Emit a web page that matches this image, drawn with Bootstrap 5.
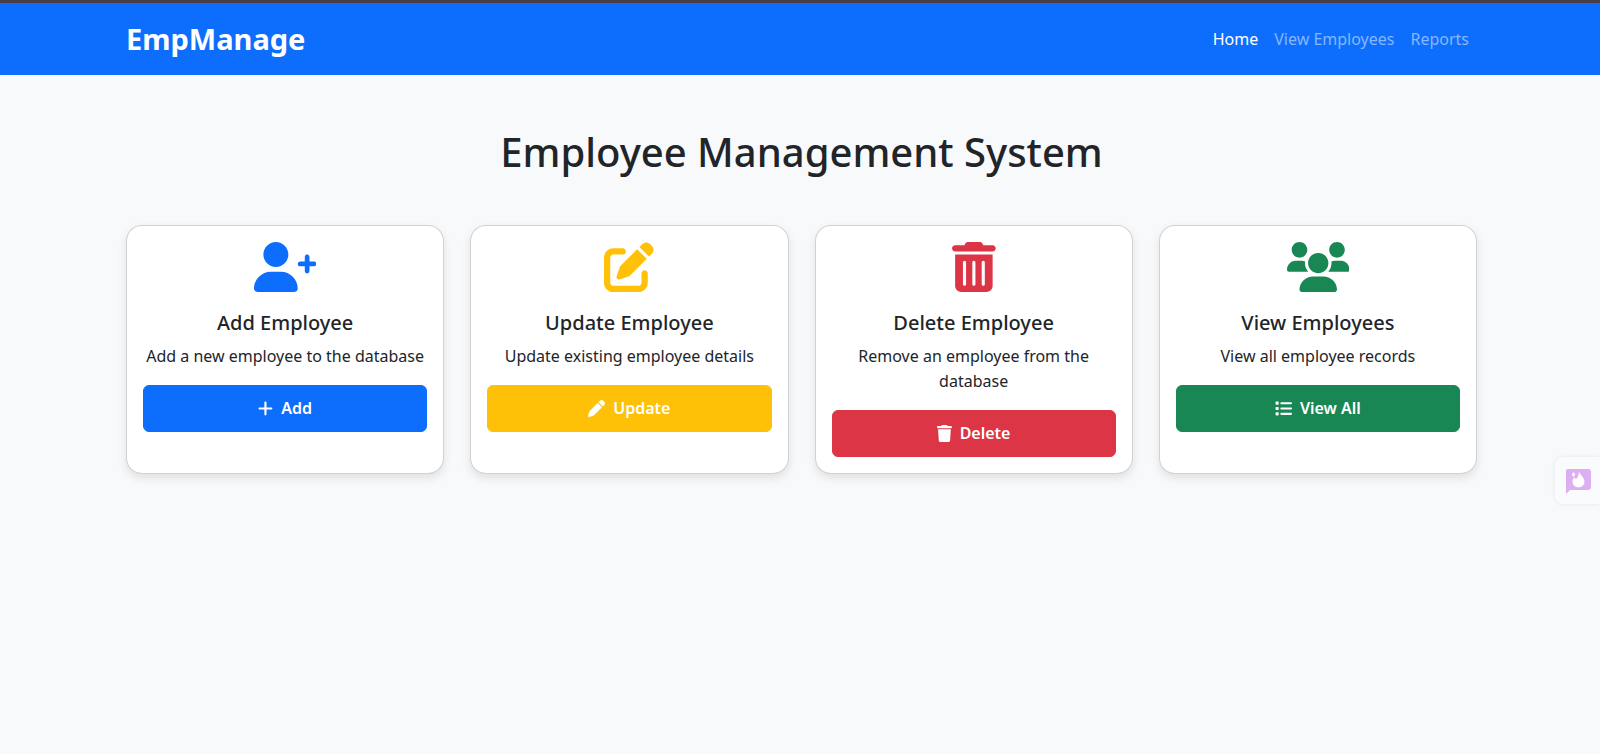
<!DOCTYPE html>
<html lang="en">
<head>
<meta charset="utf-8">
<meta name="viewport" content="width=device-width, initial-scale=1">
<title>EmpManage</title>
<link href="https://cdn.jsdelivr.net/npm/bootstrap@5.3.0/dist/css/bootstrap.min.css" rel="stylesheet">
<style>
  body { font-family: "Noto Sans", "Open Sans", sans-serif; font-size: 16px; line-height: 25px; background: #f8f9fa; }
  .page-width { max-width: 1378px; padding: 0 12px 0 15px; }
  .navbar > .page-width { padding: 0 12px 0 15px; }
  .site-nav { border-top: 3px solid #4c3d4b; padding: 8px 0; }
  .site-nav .navbar-brand { font-size: 29px; line-height: 40px; font-weight: 700; padding: 8px 0; margin: 0; }
  .site-nav .nav-link { padding: 8px; color: #86b7fe; }
  .site-nav .nav-link.active { color: #fff; }
  .page-title { font-size: 40px; line-height: 50px; font-weight: 500; margin: 52px 0 48px; }
  .action-row { --bs-gutter-x: 26px; --bs-gutter-y: 26px; }
  .action-card { border-radius: 16px; box-shadow: 0 4px 10px rgba(0, 0, 0, .1); }
  .action-icon { height: 50px; margin-bottom: 18px; }
  .action-card .card-title { font-size: 20px; line-height: 25px; margin-bottom: 9px; }
  .action-btn { font-size: 16px; line-height: 25px; font-weight: 600; padding: 10px; border-radius: 6px; gap: 8px; color: #fff; }
  .action-btn:hover { color: #fff; }
  .action-btn svg { height: 17px; }
  .side-tab { top: 457px; width: 45px; height: 47px; padding: 0 0 0 9px; border: 0; border-radius: 8px 0 0 8px; background: #fafbfc; box-shadow: 0 0 4px rgba(0, 0, 0, .08); }
</style>
</head>
<body class="min-vh-100">
<nav class="navbar navbar-expand-lg navbar-dark bg-primary site-nav">
  <div class="container page-width">
    <a class="navbar-brand" href="#">EmpManage</a>
    <ul class="navbar-nav ms-auto">
      <li class="nav-item"><a class="nav-link active" href="#">Home</a></li>
      <li class="nav-item"><a class="nav-link" href="#">View Employees</a></li>
      <li class="nav-item"><a class="nav-link" href="#">Reports</a></li>
    </ul>
  </div>
</nav>

<main class="container page-width pb-5">
  <h1 class="page-title text-center">Employee Management System</h1>
  <div class="row row-cols-1 row-cols-md-2 row-cols-lg-4 action-row">
    <div class="col">
      <div class="card h-100 text-center action-card">
        <div class="card-body">
          <svg class="action-icon text-primary" viewBox="0 0 640 512" fill="currentColor" aria-hidden="true"><path d="M224 256c70.7 0 128-57.31 128-128S294.7 0 224 0C153.3 0 96 57.31 96 128S153.3 256 224 256zM274.7 304H173.3C77.61 304 0 381.6 0 477.3c0 19.14 15.52 34.67 34.66 34.67h378.7C432.5 512 448 496.5 448 477.3C448 381.6 370.4 304 274.7 304zM616 200h-48v-48C568 138.8 557.3 128 544 128s-24 10.75-24 24v48h-48C458.8 200 448 210.8 448 224s10.75 24 24 24h48v48C520 309.3 530.8 320 544 320s24-10.75 24-24v-48h48C629.3 248 640 237.3 640 224S629.3 200 616 200z"/></svg>
          <h5 class="card-title">Add Employee</h5>
          <p class="card-text mb-3">Add a new employee to the database</p>
          <button type="button" class="btn btn-primary w-100 d-flex align-items-center justify-content-center action-btn">
            <svg viewBox="0 0 448 512" fill="currentColor" aria-hidden="true"><path d="M432 256c0 17.7-14.3 32-32 32H256v144c0 17.7-14.3 32-32 32s-32-14.3-32-32V288H48c-17.7 0-32-14.3-32-32s14.3-32 32-32h144V80c0-17.7 14.3-32 32-32s32 14.3 32 32v144h144c17.7 0 32 14.3 32 32z"/></svg>Add</button>
        </div>
      </div>
    </div>
    <div class="col">
      <div class="card h-100 text-center action-card">
        <div class="card-body">
          <svg class="action-icon text-warning" viewBox="0 0 512 512" fill="currentColor" aria-hidden="true"><path d="M490.3 40.4C512.2 62.27 512.2 97.73 490.3 119.6L460.3 149.7L362.3 51.72L392.4 21.66C414.3-.2135 449.7-.2135 471.6 21.66L490.3 40.4zM172.4 241.7L339.7 74.34L437.7 172.3L270.3 339.6C264.2 345.8 256.7 350.4 248.4 353.2L159.6 382.8C150.1 385.6 141.5 383.4 135 376.1C128.6 370.5 126.4 361 129.2 352.4L158.8 263.6C161.6 255.3 166.2 247.8 172.4 241.7V241.7zM192 64C209.7 64 224 78.33 224 96C224 113.7 209.7 128 192 128H96C78.33 128 64 142.3 64 160V416C64 433.7 78.33 448 96 448H352C369.7 448 384 433.7 384 416V320C384 302.3 398.3 288 416 288C433.7 288 448 302.3 448 320V416C448 469 405 512 352 512H96C42.98 512 0 469 0 416V160C0 107 42.98 64 96 64H192z"/></svg>
          <h5 class="card-title">Update Employee</h5>
          <p class="card-text mb-3">Update existing employee details</p>
          <button type="button" class="btn btn-warning w-100 d-flex align-items-center justify-content-center action-btn">
            <svg viewBox="0 0 512 512" fill="currentColor" aria-hidden="true"><path d="M362.7 19.32C387.7-5.678 428.3-5.678 453.3 19.32L492.7 58.75C517.7 83.74 517.7 124.3 492.7 149.3L444.3 197.7L314.3 67.72L362.7 19.32zM421.7 220.3L188.5 453.4C178.1 463.8 165.2 471.5 151.1 475.6L30.77 511C22.35 513.5 13.24 511.2 7.03 504.1C.8198 498.8-1.502 489.7 .976 481.2L36.37 360.9C40.53 346.8 48.16 333.9 58.57 323.5L291.7 90.34L421.7 220.3z"/></svg>Update</button>
        </div>
      </div>
    </div>
    <div class="col">
      <div class="card h-100 text-center action-card">
        <div class="card-body">
          <svg class="action-icon text-danger" viewBox="0 0 448 512" fill="currentColor" aria-hidden="true"><path fill-rule="evenodd" d="M135.2 17.69C140.6 6.848 151.7 0 163.8 0H284.2C296.3 0 307.4 6.848 312.8 17.69L320 32H416C433.7 32 448 46.33 448 64C448 81.67 433.7 96 416 96H32C14.33 96 0 81.67 0 64C0 46.33 14.33 32 32 32H128L135.2 17.69zM32 128H416V448C416 483.3 387.3 512 352 512H96C60.65 512 32 483.3 32 448V128zM112 208v224a16 16 0 0 0 32 0V208a16 16 0 0 0-32 0zM208 208v224a16 16 0 0 0 32 0V208a16 16 0 0 0-32 0zM304 208v224a16 16 0 0 0 32 0V208a16 16 0 0 0-32 0z"/></svg>
          <h5 class="card-title">Delete Employee</h5>
          <p class="card-text mb-3">Remove an employee from the database</p>
          <button type="button" class="btn btn-danger w-100 d-flex align-items-center justify-content-center action-btn">
            <svg viewBox="0 0 448 512" fill="currentColor" aria-hidden="true"><path d="M135.2 17.69C140.6 6.848 151.7 0 163.8 0H284.2C296.3 0 307.4 6.848 312.8 17.69L320 32H416C433.7 32 448 46.33 448 64C448 81.67 433.7 96 416 96H32C14.33 96 0 81.67 0 64C0 46.33 14.33 32 32 32H128L135.2 17.69zM394.8 466.1C393.2 492.3 372.3 512 346.9 512H101.1C75.75 512 54.77 492.3 53.19 466.1L32 128H416L394.8 466.1z"/></svg>Delete</button>
        </div>
      </div>
    </div>
    <div class="col">
      <div class="card h-100 text-center action-card">
        <div class="card-body">
          <svg class="action-icon text-success" viewBox="0 0 640 512" fill="currentColor" aria-hidden="true"><path d="M320 320c57.4 0 104-46.6 104-104s-46.6-104-104-104-104 46.6-104 104 46.6 104 104 104zM369.9 352H270.1C191.6 352 128 411.7 128 485.3C128 500.1 140.7 512 156.4 512h327.2C499.3 512 512 500.1 512 485.3C512 411.7 448.4 352 369.9 352zM512 160c44.18 0 80-35.82 80-80S556.2 0 512 0c-44.18 0-80 35.82-80 80S467.8 160 512 160zM183.9 216c0-5.449 .9824-10.63 1.609-15.91C174.6 194.1 162.6 192 149.9 192H88.08C39.44 192 0 233.8 0 285.3C0 295.6 7.887 304 17.62 304h199.5C196.7 280.2 183.9 249.7 183.9 216zM128 160c44.18 0 80-35.82 80-80S172.2 0 128 0C83.82 0 48 35.82 48 80S83.82 160 128 160zM551.9 192h-61.84c-12.8 0-24.88 3.037-35.86 8.24C454.8 205.5 455.8 210.6 455.8 216c0 33.71-12.78 64.21-33.16 88h199.7C632.1 304 640 295.6 640 285.3C640 233.8 600.6 192 551.9 192z"/></svg>
          <h5 class="card-title">View Employees</h5>
          <p class="card-text mb-3">View all employee records</p>
          <button type="button" class="btn btn-success w-100 d-flex align-items-center justify-content-center action-btn">
            <svg viewBox="0 0 512 512" fill="currentColor" aria-hidden="true"><rect x="16" y="48" width="96" height="96" rx="24"/><rect x="16" y="208" width="96" height="96" rx="24"/><rect x="16" y="368" width="96" height="96" rx="24"/><rect x="160" y="64" width="352" height="64" rx="32"/><rect x="160" y="224" width="352" height="64" rx="32"/><rect x="160" y="384" width="352" height="64" rx="32"/></svg>View All</button>
        </div>
      </div>
    </div>
  </div>
</main>

<button type="button" class="position-fixed end-0 d-flex align-items-center side-tab" aria-label="Feedback">
  <svg width="28" height="28" viewBox="0 0 28 28" aria-hidden="true"><path fill="#dcaef2" d="M4 2h20a3 3 0 0 1 3 3v15a3 3 0 0 1-3 3H6l-4 4V4a2 2 0 0 1 2-2z"/><path fill="#fff" d="M15 4c0 3 5.500 6 5.500 10.500a6 6 0 0 1-12 0c0-1.800 .8-3.200 1.800-4.200l1.700 2c2-2 3-5 3-8.300z"/><ellipse cx="9.500" cy="7.500" rx="1.500" ry="2" fill="#fff"/></svg>
</button>
<script src="https://cdn.jsdelivr.net/npm/bootstrap@5.3.0/dist/js/bootstrap.bundle.min.js"></script>
</body>
</html>
